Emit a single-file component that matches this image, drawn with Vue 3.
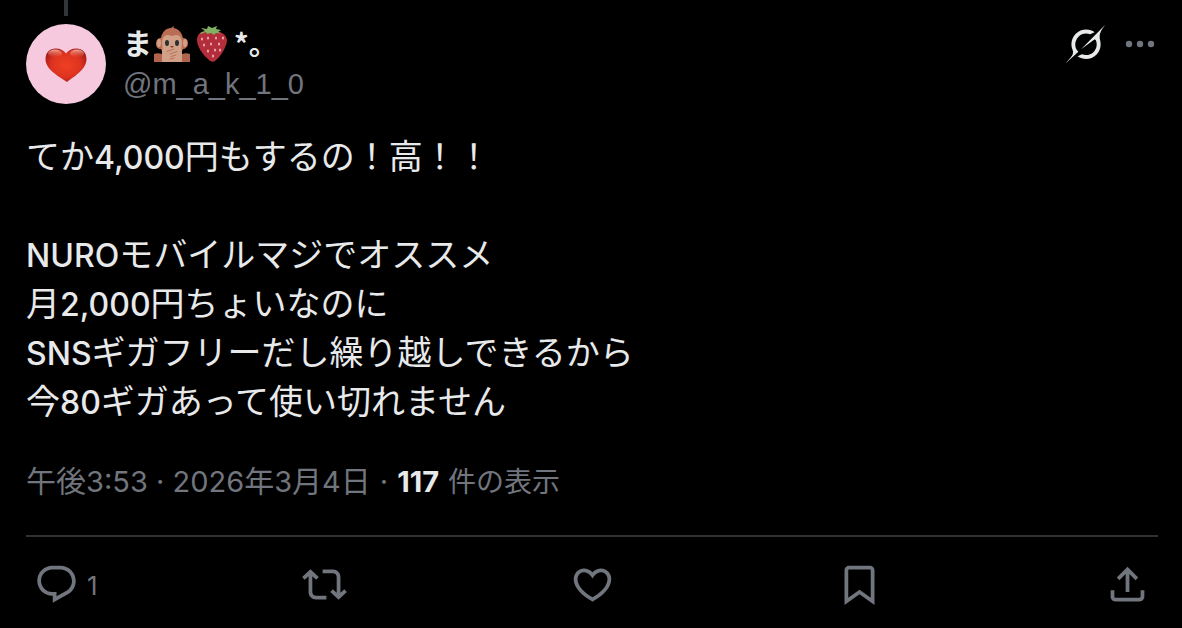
<script setup>
const lines = [
  'てか4,000円もするの！高！！',
  '',
  'NUROモバイルマジでオススメ',
  '月2,000円ちょいなのに',
  'SNSギガフリーだし繰り越しできるから',
  '今80ギガあって使い切れません',
]

// Odd entries of the result are the Latin runs.
const runs = (text) => text.split(/([A-Za-z0-9,:· ]+)/)

const actions = [
  {
    label: '返信',
    count: 1,
    path: 'M1.751 10c0-4.42 3.584-8 8.005-8h4.366c4.49 0 8.129 3.64 8.129 8.13 0 2.96-1.607 5.68-4.196 7.11l-8.054 4.46v-3.69h-.067c-4.49.1-8.183-3.51-8.183-8.01zm8.005-6c-3.317 0-6.005 2.69-6.005 6 0 3.37 2.77 6.08 6.138 6.01l.351-.01h1.761v2.3l5.087-2.81c1.951-1.08 3.163-3.13 3.163-5.36 0-3.39-2.744-6.13-6.129-6.13H9.756z',
  },
  {
    label: 'リポスト',
    path: 'M4.5 3.88l4.432 4.14-1.364 1.46L5.5 7.55V16c0 1.1.896 2 2 2H13v2H7.5c-2.209 0-4-1.79-4-4V7.55L1.432 9.48.068 8.02 4.5 3.88zM16.5 6H11V4h5.5c2.209 0 4 1.79 4 4v8.45l2.068-1.93 1.364 1.46-4.432 4.14-4.432-4.14 1.364-1.46 2.068 1.93V8c0-1.1-.896-2-2-2z',
  },
  {
    label: 'いいね',
    path: 'M16.697 5.5c-1.222-.06-2.679.51-3.89 2.16l-.805 1.09-.806-1.09C9.984 6.01 8.526 5.44 7.304 5.5c-1.243.07-2.349.78-2.91 1.91-.552 1.12-.633 2.78.479 4.82 1.074 1.97 3.257 4.27 7.129 6.61 3.87-2.34 6.052-4.64 7.126-6.61 1.111-2.04 1.03-3.7.477-4.82-.561-1.13-1.666-1.84-2.908-1.91zm4.187 7.69c-1.351 2.48-4.001 5.12-8.379 7.67l-.503.3-.504-.3c-4.379-2.55-7.029-5.19-8.382-7.67-1.36-2.5-1.41-4.86-.514-6.67.887-1.79 2.647-2.91 4.601-3.01 1.651-.09 3.368.56 4.798 2.01 1.429-1.45 3.146-2.1 4.796-2.01 1.954.1 3.714 1.22 4.601 3.01.896 1.81.846 4.17-.514 6.67z',
  },
  {
    label: 'ブックマーク',
    path: 'M4 4.5C4 3.12 5.119 2 6.5 2h11C18.881 2 20 3.12 20 4.5v18.44l-8-5.71-8 5.71V4.5zM6.5 4c-.276 0-.5.22-.5.5v14.56l6-4.29 6 4.29V4.5c0-.28-.224-.5-.5-.5h-11z',
  },
  {
    label: '共有',
    path: 'M12 2.59l5.7 5.7-1.41 1.42L13 6.41V16h-2V6.41l-3.3 3.3-1.41-1.42L12 2.59zM21 15l-.02 3.51c0 1.38-1.12 2.49-2.5 2.49H5.5C4.11 21 3 19.88 3 18.5V15h2v3.5c0 .28.22.5.5.5h12.98c.28 0 .5-.22.5-.5L19 15h2z',
  },
]
</script>

<template>
  <article class="post">
    <div class="thread"></div>
    <header class="head">
      <svg class="avatar" viewBox="0 0 80 80" role="img" aria-label="プロフィール画像">
        <defs>
          <radialGradient id="heartFill" cx="0.5" cy="0.5" r="0.6">
            <stop offset="0" stop-color="#ee4022" />
            <stop offset="0.6" stop-color="#dd331f" />
            <stop offset="1" stop-color="#9c161a" />
          </radialGradient>
          <linearGradient id="heartShine" x1="0" y1="0" x2="0" y2="1">
            <stop offset="0" stop-color="#ffc9b8" stop-opacity="0.8" />
            <stop offset="1" stop-color="#ff7a5c" stop-opacity="0" />
          </linearGradient>
        </defs>
        <circle cx="40" cy="40" r="40" fill="#f6c9de" />
        <path d="M41 58C34 53 19.500 46 19.500 35C19.500 28.500 24 24.500 29.500 24.500C34.500 24.500 38 26.500 40 29.500C42 26.500 45.500 24.500 50.500 24.500C56 24.500 60.500 28.500 60.500 35C60.500 46 47 53 41 58Z" fill="url(#heartFill)" />
        <ellipse cx="29" cy="29.500" rx="7" ry="4" fill="url(#heartShine)" />
        <ellipse cx="51" cy="29.500" rx="7" ry="4" fill="url(#heartShine)" />
      </svg>
      <div class="who">
        <div class="name">
          <span class="glyphs">ま</span>
          <svg class="emoji" viewBox="0 0 36 36" role="img" aria-label="言わざる">
            <path d="M2 18C2 13 5 12 7 12C8 6 12 2 17 2L20 0L19.500 2C25 3 28 7 29 12C31 12 34 13 34 17C34 21 31 23 29 23L26 29H10L7 23C4 23 2 21 2 18Z" fill="#bb6d53" />
            <ellipse cx="5" cy="17" rx="2" ry="4" fill="#d2a087" />
            <ellipse cx="31" cy="17" rx="2" ry="4" fill="#d2a087" />
            <path d="M8 17C8 11 11 9 14 9C16 9 17 10 18 10C19 10 20 9 22 9C26 9 28 12 28 17C28 20 27 22 28 25C28 31 24 34 18 34C12 34 8 31 8 25C9 22 8 20 8 17Z" fill="#d2a087" />
            <ellipse cx="13" cy="17" rx="2" ry="3" fill="#292f33" />
            <ellipse cx="23" cy="17" rx="2" ry="3" fill="#292f33" />
            <path d="M16 20H20L18 22Z" fill="#7b3f2e" />
            <path d="M0 28Q5 26 10 29V36H0ZM36 28Q31 26 26 29V36H36Z" fill="#b0644d" />
            <path d="M8 28C8 24 10 20 12 20C14 20 14 22 13 25L20 22C23 21 23 23 21 24C25 23 26 25 24 26L28 27V36H8Z" fill="#d2a087" />
            <path d="M13 25.500L20 23M16 28L23 25.500M17 30.500L22 29M16 33L20 32" stroke="#b3745c" stroke-width="1" fill="none" stroke-linecap="round" />
          </svg>
          <svg class="emoji" viewBox="0 0 36 36" role="img" aria-label="いちご">
            <path d="M3 14C3 8 7 5 13 5C17 4 24 4 28 7C33 10 34 14 32 19C30 25 26 31 21 35C19 36.500 16 35.500 14 33C8 28 3 20 3 14Z" fill="#b32d3b" />
            <path d="M6 7L11 5L7 2L13 3L14 0L18 2L23 0L22 3L27 4L24 6L27 7.500L22 7L20 9L17 7L13 8L12 6L7 8Z" fill="#80b062" />
            <g fill="#ecb0bb">
              <ellipse cx="8" cy="13" rx="1" ry="1.500" /><ellipse cx="14" cy="12" rx="1" ry="1.500" />
              <ellipse cx="22" cy="12" rx="1" ry="1.500" /><ellipse cx="29" cy="12" rx="1" ry="1.500" />
              <ellipse cx="10" cy="19" rx="1" ry="1.500" /><ellipse cx="17" cy="18" rx="1" ry="1.500" />
              <ellipse cx="25" cy="18" rx="1" ry="1.500" /><ellipse cx="14" cy="25" rx="1" ry="1.500" />
              <ellipse cx="21" cy="24" rx="1" ry="1.500" /><ellipse cx="26" cy="24" rx="1" ry="1.500" />
              <ellipse cx="19" cy="30" rx="1" ry="1.500" />
            </g>
          </svg>
          <span class="glyphs">*。</span>
        </div>
        <a class="handle" href="#">@m_a_k_1_0</a>
      </div>
      <div class="tools">
        <button class="tool" type="button" aria-label="Grok">
          <svg class="grok" viewBox="0 0 33 32">
            <path d="M12.745 20.54l10.97-8.19c.539-.4 1.307-.244 1.564.38 1.349 3.288.746 7.241-1.938 9.955-2.683 2.714-6.417 3.31-9.83 1.954l-3.728 1.745c5.347 3.697 11.84 2.782 15.898-1.324 3.219-3.255 4.216-7.692 3.284-11.693l.008.009c-1.351-5.878.332-8.227 3.782-13.031L33 0l-4.54 4.59v-.014L12.743 20.544m-2.263 1.987c-3.837-3.707-3.175-9.446.1-12.755 2.42-2.449 6.388-3.448 9.852-1.979l3.72-1.737c-.67-.49-1.53-1.017-2.515-1.387-4.455-1.854-9.789-.931-13.41 2.728-3.483 3.523-4.579 8.94-2.697 13.561 1.405 3.454-.899 5.898-3.22 8.364C1.49 30.2.666 31.074 0 32l10.478-9.466" />
          </svg>
        </button>
        <button class="tool" type="button" aria-label="もっと見る">
          <svg class="dots" viewBox="0 0 30 8">
            <circle cx="4" cy="4" r="3.200" /><circle cx="15" cy="4" r="3.200" /><circle cx="26" cy="4" r="3.200" />
          </svg>
        </button>
      </div>
    </header>

    <div class="body">
      <p v-for="(line, i) in lines" :key="i" class="line">
        <template v-for="(run, j) in runs(line)" :key="j"><span v-if="j % 2" class="latin">{{ run }}</span><template v-else>{{ run }}</template></template>
      </p>
    </div>

    <div class="meta">
      <a class="time" href="#"><template v-for="(run, j) in runs('午後3:53 · 2026年3月4日')" :key="j"><span v-if="j % 2" class="latin">{{ run }}</span><template v-else>{{ run }}</template></template></a>
      <span class="latin">·</span>
      <a class="views" href="#"><strong>117</strong><span>件の表示</span></a>
    </div>

    <footer class="actions">
      <button v-for="a in actions" :key="a.label" class="action" type="button" :aria-label="a.label">
        <svg class="icon" viewBox="0 0 24 24"><path :d="a.path" /></svg>
        <span v-if="a.count" class="count">{{ a.count }}</span>
      </button>
    </footer>
  </article>
</template>

<style>
html,
body {
  background: #000;
}
body {
  margin: 0;
}
</style>

<style scoped>
.post {
  padding: 0 24px 0 26px;
  color: #e7e9ea;
  font-family: Inter, "Noto Sans CJK JP", sans-serif;
}
.thread {
  width: 4px;
  height: 16px;
  margin: 0 0 8px 38px;
  background: #333639;
}
.head {
  display: flex;
  align-items: flex-start;
}
.avatar {
  width: 80px;
  height: 80px;
  margin-right: 17px;
}
.who {
  flex: 1;
}
.name {
  display: flex;
  align-items: center;
  gap: 2px;
  height: 40px;
  font: 700 29px/40px "Noto Sans CJK JP", sans-serif;
}
.glyphs {
  padding-bottom: 5px;
}
.emoji {
  width: 36px;
  height: 36px;
  margin-right: 2px;
}
.handle {
  display: block;
  color: #71757d;
  font: 400 29px/40px "Liberation Sans", sans-serif;
  text-decoration: none;
}
.tools {
  display: flex;
  align-items: center;
  gap: 20px;
  height: 40px;
}
.tool {
  display: flex;
  padding: 0;
  border: 0;
  background: none;
}
.grok {
  width: 39px;
  height: 38px;
  fill: #e7e9ea;
}
.dots {
  width: 30px;
  height: 8px;
  margin-right: 3px;
  fill: #71757d;
}
.body {
  margin-top: 26px;
}
.line {
  height: 49px;
  margin: 0;
  font: 400 34px/49px "Noto Sans CJK JP", sans-serif;
}
.latin {
  font-family: Inter, sans-serif;
  font-size: 32px;
  font-weight: 500;
}
.meta {
  display: flex;
  align-items: baseline;
  gap: 9px;
  height: 40px;
  margin-top: 35px;
  color: #71757d;
  font: 400 30px/40px "Noto Sans CJK JP", sans-serif;
}
.meta a {
  color: inherit;
  text-decoration: none;
}
.meta .latin {
  font-size: 29px;
  font-weight: 400;
}
.meta .views {
  display: flex;
  align-items: baseline;
  gap: 9px;
  font-size: 28px;
}
.views strong {
  color: #e7e9ea;
  font-family: Inter, sans-serif;
  font-size: 29px;
}
.actions {
  display: flex;
  justify-content: space-between;
  margin-top: 36px;
  padding: 25px 8px 20px;
  border-top: 2px solid #2f3336;
}
.action {
  display: flex;
  align-items: center;
  gap: 8px;
  width: 45px;
  padding: 0;
  border: 0;
  background: none;
  color: #71757d;
}
.icon {
  flex: none;
  width: 45px;
  height: 45px;
  fill: currentColor;
}
.count {
  padding-top: 2px;
  font: 400 26px/32px Inter, sans-serif;
}
</style>
